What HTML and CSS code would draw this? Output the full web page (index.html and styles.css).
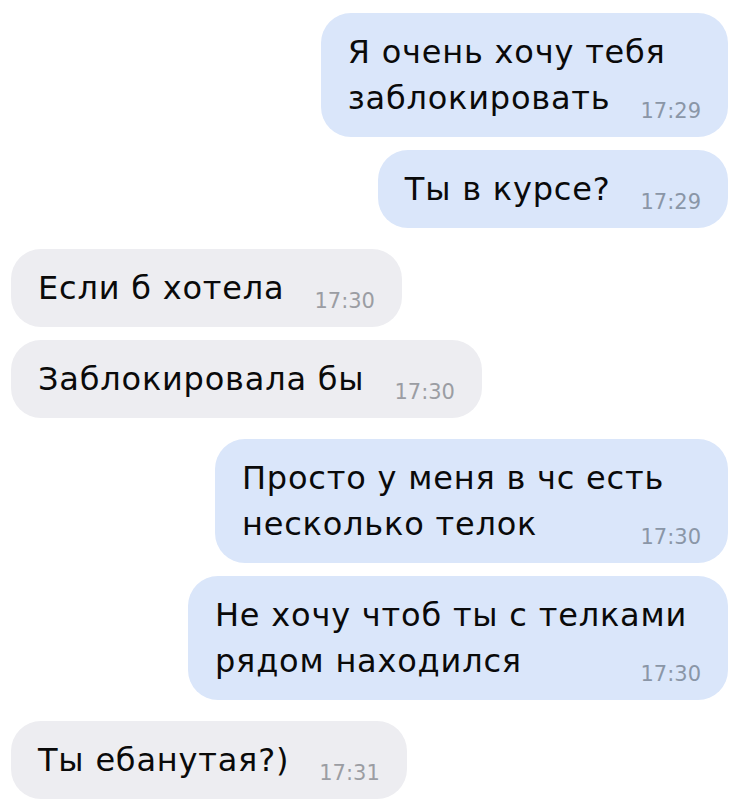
FILE: index.html
```html
<!DOCTYPE html>
<html lang="ru">
<head>
<meta charset="utf-8">
<title>Чат</title>
<link rel="stylesheet" href="styles.css">
</head>
<body>
<main class="chat">
  <div class="bubble bubble--out">
    <div class="line">Я очень хочу тебя</div>
    <div class="line line--last"><span>заблокировать</span><time class="time">17:29</time></div>
  </div>
  <div class="bubble bubble--out bubble--same">
    <div class="line line--last"><span>Ты в курсе?</span><time class="time">17:29</time></div>
  </div>
  <div class="bubble bubble--in bubble--switch">
    <div class="line line--last"><span>Если б хотела</span><time class="time">17:30</time></div>
  </div>
  <div class="bubble bubble--in bubble--same">
    <div class="line line--last"><span>Заблокировала бы</span><time class="time">17:30</time></div>
  </div>
  <div class="bubble bubble--out bubble--switch bubble--w513">
    <div class="line">Просто у меня в чс есть</div>
    <div class="line line--last"><span>несколько телок</span><time class="time">17:30</time></div>
  </div>
  <div class="bubble bubble--out bubble--same bubble--w540">
    <div class="line">Не хочу чтоб ты с телками</div>
    <div class="line line--last"><span>рядом находился</span><time class="time">17:30</time></div>
  </div>
  <div class="bubble bubble--in bubble--switch">
    <div class="line line--last"><span>Ты ебанутая?)</span><time class="time">17:31</time></div>
  </div>
</main>
</body>
</html>
```
FILE: styles.css
```css
html, body {
  margin: 0;
  padding: 0;
  background: #ffffff;
}

.chat {
  display: flex;
  flex-direction: column;
  padding: 13px 8px 0 11px;
  font-family: "DejaVu Sans", "Liberation Sans", sans-serif;
  color: #0a0a0a;
}

.bubble {
  box-sizing: border-box;
  padding: 16px 27px 16px 27px;
  border-radius: 30px;
  font-size: 32px;
  line-height: 46px;
  letter-spacing: 0.8px;
  white-space: nowrap;
}

.bubble--out {
  align-self: flex-end;
  background: #dae6fa;
}

.bubble--in {
  align-self: flex-start;
  background: #ededf1;
}

.bubble--same { margin-top: 13px; }
.bubble--switch { margin-top: 21px; }

.bubble--w513 { min-width: 513px; }
.bubble--w540 { min-width: 540px; }

.line--last {
  display: flex;
  justify-content: space-between;
  align-items: flex-end;
  gap: 30px;
}

.time {
  font-size: 21px;
  line-height: 20px;
  letter-spacing: 0;
  margin-bottom: 0;
  color: #8a96a7;
}

.bubble--in .time {
  color: #9b9da3;
}
```
